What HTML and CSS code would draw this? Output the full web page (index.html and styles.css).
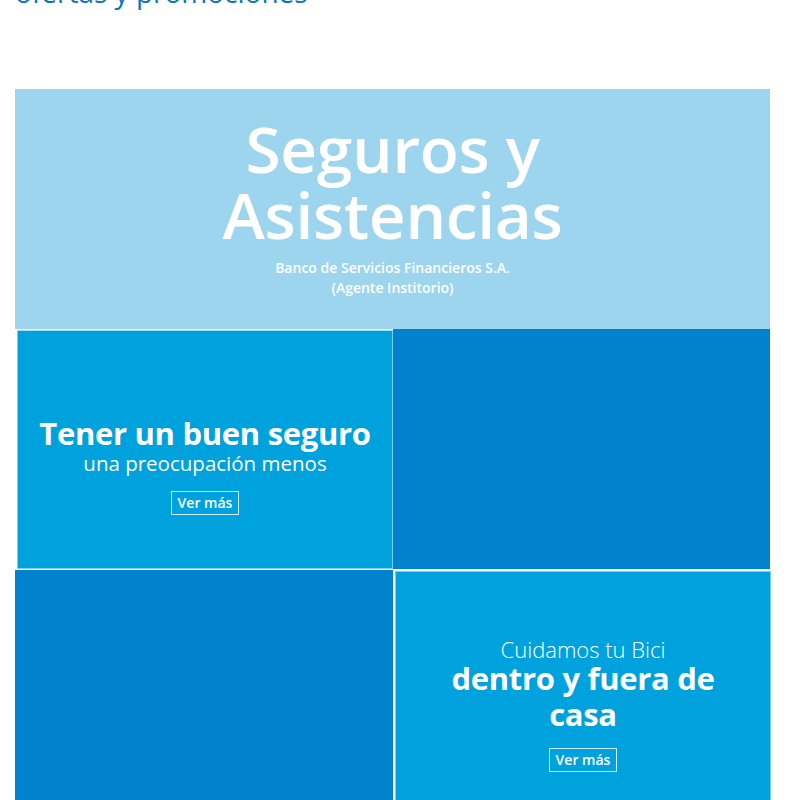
FILE: index.html
```html
<!DOCTYPE html>
<html lang="es">
<head>
<meta charset="utf-8">
<title>Seguros y Asistencias</title>
<link rel="stylesheet" href="styles.css">
</head>
<body>
<div class="page">
  <h2 class="section-title">ofertas y promociones</h2>
  <section class="hero">
    <h1 class="hero-title"><span class="hero-line">Seguros y</span><span class="hero-line">Asistencias</span></h1>
    <p class="hero-sub">Banco de Servicios Financieros S.A.<br>(Agente Institorio)</p>
  </section>
  <div class="grid">
    <div class="tile tile-light tile-a">
      <p class="tile-strong">Tener un buen seguro</p>
      <p class="tile-soft">una preocupación menos</p>
      <a class="btn" href="#">Ver más</a>
    </div>
    <div class="tile tile-dark tile-b"></div>
    <div class="tile tile-dark tile-c"></div>
    <div class="tile tile-light tile-d">
      <p class="tile-thin">Cuidamos tu Bici</p>
      <p class="tile-strong">dentro y fuera de<br>casa</p>
      <a class="btn btn-2" href="#">Ver más</a>
    </div>
  </div>
</div>
</body>
</html>
```

FILE: styles.css
```css
* { box-sizing: border-box; }
html, body { margin: 0; padding: 0; background: #fff; overflow: hidden; }
body { font-family: "Open Sans", "Noto Sans", sans-serif; }
.page { width: 800px; padding-left: 15px; }
.section-title {
  margin: -28px 0 0 0;
  font-size: 28px;
  line-height: 40px;
  font-weight: 400;
  color: #0a74c4;
  height: 117px;
}
.hero {
  width: 755px;
  height: 240px;
  background: #9cd5ed;
  color: #fff;
  text-align: center;
  padding-top: 27px;
}
.hero-title {
  margin: 0;
  font-size: 64px;
  line-height: 66px;
  font-weight: 600;
  letter-spacing: -0.3px;
}
.hero-line { display: block; height: 66px; }
.hero-sub {
  margin: 10px 0 0 0;
  font-size: 14px;
  line-height: 20px;
  font-weight: 600;
}
.grid {
  display: grid;
  grid-template-columns: 378px 377px;
  grid-template-rows: 240px 231px;
}
.tile {
  color: #fff;
  text-align: center;
  display: flex;
  flex-direction: column;
  align-items: center;
  justify-content: flex-start;
}
.tile-light { background: #00a2dd; }
.tile-dark { background: #0082cc; }
.tile-a {
  margin: 1px 0 0 2px;
  border: 1px solid #7fcdee;
  border-top-color: #9fdcf3;
  height: 239px;
  padding-top: 84px;
}
.tile-c { margin-top: 1px; }
.tile-d {
  margin: 2px -1px 0 2px;
  border: 1px solid #7fcdee;
  border-bottom: none;
  padding-top: 66px;
}
.tile p { margin: 0; }
.tile-strong {
  font-size: 31px;
  line-height: 36px;
  font-weight: 700;
  letter-spacing: -0.3px;
}
.tile-soft {
  font-size: 20.5px;
  line-height: 24px;
  font-weight: 400;
}
.tile-thin {
  font-size: 22px;
  line-height: 22px;
  font-weight: 300;
}
.btn {
  display: inline-block;
  margin-top: 16px;
  border: 1px solid #cdeefa;
  color: #fff;
  text-decoration: none;
  font-size: 14px;
  font-weight: 600;
  line-height: 22px;
  padding: 0 6px;
}
.btn-2 { margin-top: 16px; }
```
